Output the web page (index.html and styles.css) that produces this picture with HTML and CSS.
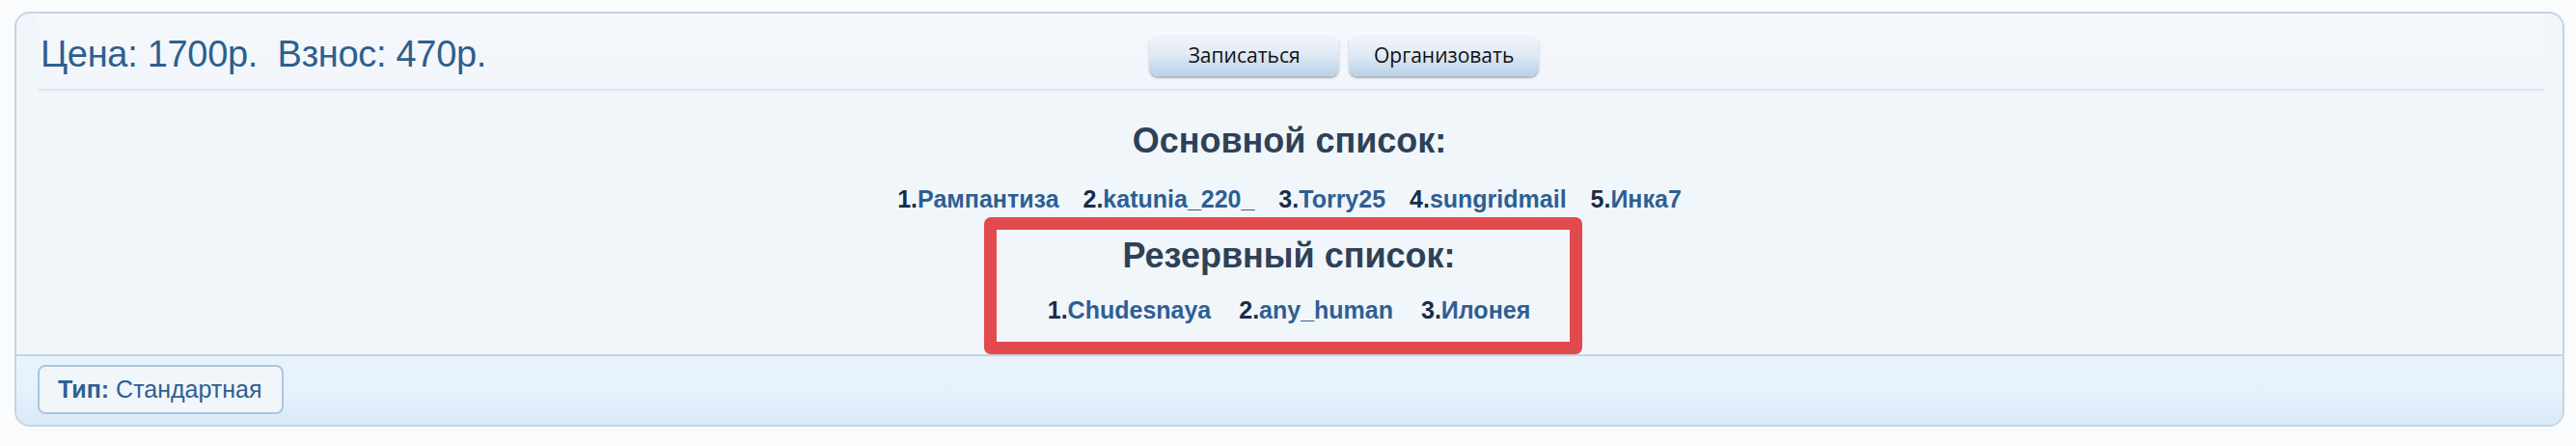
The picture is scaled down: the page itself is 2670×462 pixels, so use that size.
FILE: index.html
```html
<!DOCTYPE html>
<html lang="ru">
<head>
    <meta charset="UTF-8">
    <title>Запись</title>
    <link rel="stylesheet" href="styles.css">
</head>
<body>

    <div class="card">
        <div class="card-head">
            <h1 class="price">Цена: 1700р.&nbsp; Взнос: 470р.</h1>
            <div class="actions">
                <button>Записаться</button>
                <button>Организовать</button>
            </div>
        </div>

        <div class="card-body">
            <h3>Основной список:</h3>
            <ul class="members">
                <li><b>1.</b><a href="#">Рампантиза</a></li>
                <li><b>2.</b><a href="#">katunia_220_</a></li>
                <li><b>3.</b><a href="#">Torry25</a></li>
                <li><b>4.</b><a href="#">sungridmail</a></li>
                <li><b>5.</b><a href="#">Инка7</a></li>
            </ul>

            <div class="reserve">
                <h3>Резервный список:</h3>
                <ul class="members">
                    <li><b>1.</b><a href="#">Chudesnaya</a></li>
                    <li><b>2.</b><a href="#">any_human</a></li>
                    <li><b>3.</b><a href="#">Илонея</a></li>
                </ul>
            </div>
        </div>

        <div class="card-foot">
            <span class="tag"><strong>Тип:</strong> Стандартная</span>
        </div>
    </div>

</body>
</html>
```

FILE: styles.css
```css
body {
    font-family: "Liberation Sans", Arial, sans-serif;
    background-color: #fafbfd;
    margin: 0;
    padding: 12px 12px 20px 15px;
}
.card {
    background-color: #f1f6fb;
    border: 2px solid #c5d4e4;
    border-radius: 16px;
    overflow: hidden;
}
.card-head {
    display: flex;
    align-items: center;
    margin: 0 19px 0 22px;
    padding: 20px 0 13px 0;
    border-bottom: 2px solid #d9e8f6;
    background: linear-gradient(#f5f8fb, #f1f6fb);
}
.price {
    margin: 0 0 0 3px;
    font-size: 38px;
    font-weight: normal;
    letter-spacing: -0.3px;
    color: #2d5f8f;
    line-height: 45px;
}
.actions {
    display: flex;
    gap: 10px;
    margin-left: 687px;
}
.actions button {
    width: 197px;
    height: 45px;
    border: none;
    border-radius: 9px;
    background: linear-gradient(#f2f6fb, #e3ecf6 45%, #b9d1e7);
    box-shadow: 0 2px 2px rgba(90, 90, 110, 0.45), inset 0 1px 0 #ffffff;
    font-family: "Open Sans", sans-serif;
    font-size: 21px;
    color: #111;
    cursor: pointer;
}
.card-body {
    padding: 32px 0 0 0;
    text-align: center;
}
.card-body h3 {
    margin: 0;
    font-size: 36px;
    line-height: 40px;
    color: #2e4157;
}
.members {
    list-style: none;
    margin: 26px 0 0 0;
    padding: 0;
    font-size: 25px;
    line-height: 28px;
    font-weight: bold;
}
.members li {
    display: inline-block;
    margin: 0 9px;
}
.members b {
    color: #182c47;
}
.members a {
    color: #2e5f92;
    text-decoration: none;
}
.reserve {
    width: 582px;
    margin: 5px auto 0 1003px;
    padding: 7px 0 19px 12px;
    border: 13px solid #e24a4d;
    border-radius: 7px;
    background-color: #f1f6fb;
}
.reserve .members {
    margin-top: 22px;
}
.reserve .members li {
    margin: 0 11px;
}
.card-foot {
    border-top: 2px solid #c3d3e3;
    padding: 9px 22px 11px 22px;
    background: linear-gradient(#e9f3fc, #e6f1fb 50%, #d9e9f8);
}
.tag {
    display: inline-block;
    padding: 0 20px 0 19px;
    height: 47px;
    line-height: 47px;
    border: 2px solid #a9c6e1;
    border-radius: 8px;
    background-color: #f1f6fb;
    font-size: 25px;
    color: #2e5f92;
}
```
